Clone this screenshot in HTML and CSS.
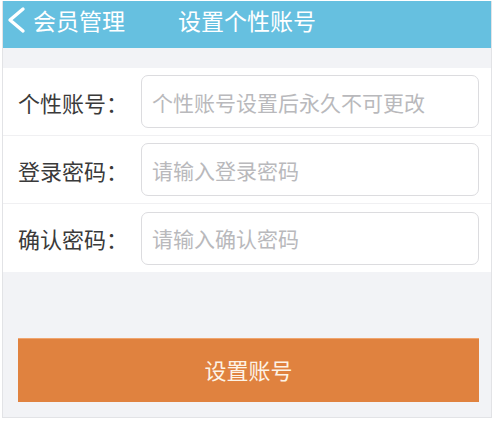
FILE: index.html
```html
<!DOCTYPE html>
<html lang="zh-CN">
<head>
<meta charset="UTF-8">
<meta name="viewport" content="width=device-width, initial-scale=1.0">
<title>设置个性账号</title>
<link rel="stylesheet" href="styles.css">
</head>
<body>
<div class="phone">
    <div class="top-bar">
        <a class="back" href="#">
            <svg class="back-icon" width="22" height="28" viewBox="0 0 22 28">
                <path d="M18 3 L5 14 L18 25" fill="none" stroke="#ffffff" stroke-width="3.4" stroke-linecap="round" stroke-linejoin="round"/>
            </svg>
            <span>会员管理</span>
        </a>
        <div class="title">设置个性账号</div>
        <div></div>
    </div>

    <div class="gap"></div>

    <form class="form">
        <div class="row">
            <label class="labelTxt" for="account">个性账号：</label>
            <input class="field" type="text" id="account" placeholder="个性账号设置后永久不可更改">
        </div>
        <div class="row">
            <label class="labelTxt" for="pwd">登录密码：</label>
            <input class="field" type="password" id="pwd" placeholder="请输入登录密码">
        </div>
        <div class="row">
            <label class="labelTxt" for="pwd2">确认密码：</label>
            <input class="field" type="password" id="pwd2" placeholder="请输入确认密码">
        </div>
    </form>

    <div class="bottom">
        <button class="submit-btn" type="button">设置账号</button>
    </div>
</div>
</body>
</html>
```

FILE: styles.css
```css
body, html {
    margin: 0;
    background: #ffffff;
    font-family: "Noto Sans CJK SC", "Noto Sans", sans-serif;
}
.phone {
    width: 488px;
    height: 416px;
    margin: 1px 0 0 2px;
    border: 1px solid #e2e3e6;
    border-top: none;
    background: #f2f3f6;
    display: flex;
    flex-direction: column;
}
.top-bar {
    height: 37px;
    padding-bottom: 10px;
    background: #66c0e0;
    color: #ffffff;
    display: grid;
    grid-template-columns: 1fr auto 1fr;
    align-items: center;
}
.back {
    display: flex;
    align-items: center;
    color: #ffffff;
    text-decoration: none;
    font-size: 23px;
    padding-left: 2px;
}
.back-icon {
    margin-right: 6px;
}
.title {
    font-size: 23px;
}
.gap {
    height: 20px;
}
.form {
    margin: 0;
    background: #ffffff;
}
.row {
    height: 67px;
    display: flex;
    align-items: center;
    padding: 0 12px 0 15px;
    border-bottom: 1px solid #f0f0f2;
}
.row:last-child {
    border-bottom: none;
    height: 68px;
}
.labelTxt {
    width: 123px;
    font-size: 22px;
    color: #3a3a3a;
}
.field {
    flex: 1;
    box-sizing: border-box;
    height: 53px;
    border: 1px solid #dcdcdf;
    border-radius: 7px;
    padding: 0 10px;
    font-family: "Noto Sans CJK SC", sans-serif;
    font-size: 21px;
    color: #333333;
    outline: none;
}
.field::placeholder {
    color: #b9b9bc;
}
.bottom {
    flex: 1;
    padding: 66px 12px 0 15px;
}
.submit-btn {
    display: block;
    width: 100%;
    height: 64px;
    border: none;
    border-top: 1px solid #f0a56e;
    background: #e0823f;
    color: #fdf3e6;
    font-family: "Noto Sans CJK SC", sans-serif;
    font-size: 22px;
    padding-bottom: 4px;
}
```
